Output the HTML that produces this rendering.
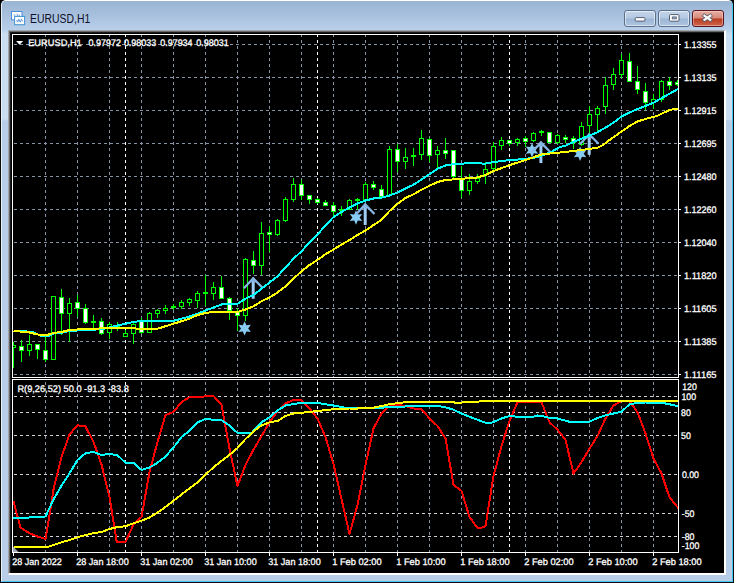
<!DOCTYPE html>
<html><head><meta charset="utf-8"><title>EURUSD,H1</title>
<style>
html,body{margin:0;padding:0;background:#fff;}
body{width:736px;height:583px;position:relative;overflow:hidden;font-family:"Liberation Sans",sans-serif;}
#win{position:absolute;left:0;top:0;width:734px;height:583px;background:#000;}
#frame{position:absolute;left:0;top:0;width:732px;height:582px;border:1px solid #0c0c0c;border-top-width:0;border-radius:5.5px 5.5px 0 0;
 background:linear-gradient(to bottom,#98b3d3 0px,#a7c0dd 15px,#b9d0ea 30px,#c9dcf0 34px,#cbdef1 119px,#b8cee8 121px,#b8cee8 100%);overflow:hidden;}
#frame:before{content:"";position:absolute;left:0;top:0;right:0;bottom:0;border:1px solid #43c6f2;border-top-color:#ffffff;border-left-color:#e8f1fa;border-radius:4.5px 4.5px 0 0;}
#client{position:absolute;left:8px;top:30px;width:715px;height:542px;background:#000;border-right:2px solid #fff;border-bottom:2px solid #fff;border-left:1px solid #a2a6ab;border-top:1px solid #a2a6ab;box-sizing:content-box;box-shadow:inset 1px 1px 0 #66686b, inset 2px 2px 0 #1a1a1b;}
#title{position:absolute;left:28.8px;top:11px;font-size:12px;line-height:16px;color:#10102a;white-space:nowrap;transform:scaleX(0.868);transform-origin:0 0;}
.btn{position:absolute;top:9.5px;width:30px;height:15px;border:1px solid #5a6f8c;border-radius:3px;
 background:linear-gradient(to bottom,#c4d5ea 0%,#b3c8e2 48%,#9db6d6 52%,#aec5e0 100%);box-shadow:inset 0 0 0 1px rgba(255,255,255,.55);}
#bclose{border-color:#5a1420;background:linear-gradient(to bottom,#e6b0a4 0%,#d88878 48%,#b93c20 52%,#cf644c 100%);box-shadow:inset 0 0 0 1px rgba(255,220,210,.45);}
.btn svg{position:absolute;left:0;top:0}
</style></head><body>
<div id="win"><div id="frame">
<svg style="position:absolute;left:10px;top:11px" width="16" height="16" viewBox="0 0 16 16"><rect x="0.5" y="0.5" width="10.5" height="8.3" fill="#fff" stroke="#4a8ee0"/><path d="M2.5 4 h2 m1 -1 l1.5 1.2 l-1.5 1.2 m2 -1.2 h1.5" fill="none" stroke="#4a8ee0" stroke-width="0.8"/><rect x="3.6" y="5.4" width="10" height="8.3" fill="#fff" stroke="#3f93d4"/><path d="M5.6 9 l1 2.2 l1.3 -3 l1.3 3 l1.3 -3 l1 2.2" fill="none" stroke="#3f86d8" stroke-width="0.85"/></svg>
<div id="title">EURUSD,H1</div>
<div class="btn" style="left:623px"><svg width="30" height="15"><rect x="10.2" y="6.6" width="9.8" height="3.5" rx="1" fill="#fff" stroke="#535e70"/></svg></div>
<div class="btn" style="left:657px"><svg width="30" height="15"><rect x="10.5" y="3.6" width="9.5" height="6.6" rx="1" fill="#fff" stroke="#535e70"/><rect x="13.2" y="5.9" width="4.2" height="2" fill="#8aa0c0" stroke="#535e70" stroke-width=".7"/></svg></div>
<div class="btn" id="bclose" style="left:691px"><svg width="30" height="15"><path d="M11.5 4.8 L17.3 8.8 M17.3 4.8 L11.5 8.8" stroke="#5b5f6e" stroke-width="3.8" stroke-linecap="square"/><path d="M11.5 4.8 L17.3 8.8 M17.3 4.8 L11.5 8.8" stroke="#fff" stroke-width="2.2" stroke-linecap="square"/></svg></div>
</div>
<div id="client"></div>
</div>
<svg width="736" height="583" viewBox="0 0 736 583" style="position:absolute;left:0;top:0">
<defs>
<clipPath id="cm"><rect x="13" y="35" width="665" height="342"/></clipPath>
<clipPath id="cs"><rect x="13" y="380" width="665" height="172"/></clipPath>
</defs>
<g stroke="#8595a6" stroke-width="1" stroke-dasharray="3 3" shape-rendering="crispEdges"><line x1="14" y1="44.5" x2="678" y2="44.5"/><line x1="14" y1="77.5" x2="678" y2="77.5"/><line x1="14" y1="110.5" x2="678" y2="110.5"/><line x1="14" y1="143.5" x2="678" y2="143.5"/><line x1="14" y1="176.5" x2="678" y2="176.5"/><line x1="14" y1="209.5" x2="678" y2="209.5"/><line x1="14" y1="242.5" x2="678" y2="242.5"/><line x1="14" y1="275.5" x2="678" y2="275.5"/><line x1="14" y1="308.5" x2="678" y2="308.5"/><line x1="14" y1="341.5" x2="678" y2="341.5"/><line x1="14" y1="374.5" x2="678" y2="374.5"/><line x1="45.5" y1="34" x2="45.5" y2="377"/><line x1="45.5" y1="382" x2="45.5" y2="552"/><line x1="77.5" y1="34" x2="77.5" y2="377"/><line x1="77.5" y1="382" x2="77.5" y2="552"/><line x1="109.5" y1="34" x2="109.5" y2="377"/><line x1="109.5" y1="382" x2="109.5" y2="552"/><line x1="141.5" y1="34" x2="141.5" y2="377"/><line x1="141.5" y1="382" x2="141.5" y2="552"/><line x1="173.5" y1="34" x2="173.5" y2="377"/><line x1="173.5" y1="382" x2="173.5" y2="552"/><line x1="205.5" y1="34" x2="205.5" y2="377"/><line x1="205.5" y1="382" x2="205.5" y2="552"/><line x1="237.5" y1="34" x2="237.5" y2="377"/><line x1="237.5" y1="382" x2="237.5" y2="552"/><line x1="269.5" y1="34" x2="269.5" y2="377"/><line x1="269.5" y1="382" x2="269.5" y2="552"/><line x1="301.5" y1="34" x2="301.5" y2="377"/><line x1="301.5" y1="382" x2="301.5" y2="552"/><line x1="333.5" y1="34" x2="333.5" y2="377"/><line x1="333.5" y1="382" x2="333.5" y2="552"/><line x1="365.5" y1="34" x2="365.5" y2="377"/><line x1="365.5" y1="382" x2="365.5" y2="552"/><line x1="397.5" y1="34" x2="397.5" y2="377"/><line x1="397.5" y1="382" x2="397.5" y2="552"/><line x1="429.5" y1="34" x2="429.5" y2="377"/><line x1="429.5" y1="382" x2="429.5" y2="552"/><line x1="461.5" y1="34" x2="461.5" y2="377"/><line x1="461.5" y1="382" x2="461.5" y2="552"/><line x1="493.5" y1="34" x2="493.5" y2="377"/><line x1="493.5" y1="382" x2="493.5" y2="552"/><line x1="525.5" y1="34" x2="525.5" y2="377"/><line x1="525.5" y1="382" x2="525.5" y2="552"/><line x1="557.5" y1="34" x2="557.5" y2="377"/><line x1="557.5" y1="382" x2="557.5" y2="552"/><line x1="589.5" y1="34" x2="589.5" y2="377"/><line x1="589.5" y1="382" x2="589.5" y2="552"/><line x1="621.5" y1="34" x2="621.5" y2="377"/><line x1="621.5" y1="382" x2="621.5" y2="552"/><line x1="653.5" y1="34" x2="653.5" y2="377"/><line x1="653.5" y1="382" x2="653.5" y2="552"/></g>
<g stroke="#d2d2d2" stroke-width="1" stroke-dasharray="3 3" shape-rendering="crispEdges"><line x1="14" y1="396.5" x2="678" y2="396.5"/><line x1="14" y1="412.5" x2="678" y2="412.5"/><line x1="14" y1="435.5" x2="678" y2="435.5"/><line x1="14" y1="474.5" x2="678" y2="474.5"/><line x1="14" y1="513.5" x2="678" y2="513.5"/><line x1="14" y1="536.5" x2="678" y2="536.5"/></g>
<g stroke="#ffffff" stroke-width="1" stroke-dasharray="3 3" shape-rendering="crispEdges"><line x1="125.5" y1="34" x2="125.5" y2="377"/><line x1="125.5" y1="382" x2="125.5" y2="552"/><line x1="317.5" y1="34" x2="317.5" y2="377"/><line x1="317.5" y1="382" x2="317.5" y2="552"/><line x1="509.5" y1="34" x2="509.5" y2="377"/><line x1="509.5" y1="382" x2="509.5" y2="552"/></g>
<g clip-path="url(#cm)" stroke="#00ff00" stroke-width="1" shape-rendering="crispEdges">
<line x1="13.5" y1="342" x2="13.5" y2="368"/>
<rect x="11.5" y="345.5" width="4" height="2.0" fill="#000"/>
<line x1="21.5" y1="340" x2="21.5" y2="362"/>
<rect x="19.5" y="346.5" width="4" height="4.0" fill="#fff"/>
<line x1="29.5" y1="335" x2="29.5" y2="356"/>
<rect x="27.5" y="344.5" width="4" height="6.0" fill="#000"/>
<line x1="37.5" y1="344" x2="37.5" y2="359"/>
<rect x="35.5" y="344.5" width="4" height="5.0" fill="#fff"/>
<line x1="45.5" y1="336" x2="45.5" y2="362"/>
<rect x="43.5" y="350.5" width="4" height="9.0" fill="#fff"/>
<line x1="53.5" y1="296" x2="53.5" y2="360"/>
<rect x="51.5" y="296.5" width="4" height="63.0" fill="#000"/>
<line x1="61.5" y1="289" x2="61.5" y2="335"/>
<rect x="59.5" y="297.5" width="4" height="16.0" fill="#fff"/>
<line x1="69.5" y1="298" x2="69.5" y2="342"/>
<rect x="67.5" y="303.5" width="4" height="10.0" fill="#000"/>
<line x1="77.5" y1="295" x2="77.5" y2="317"/>
<rect x="75.5" y="302.5" width="4" height="6.0" fill="#fff"/>
<line x1="85.5" y1="304" x2="85.5" y2="324"/>
<rect x="83.5" y="308.5" width="4" height="14.0" fill="#fff"/>
<line x1="93.5" y1="315" x2="93.5" y2="328"/>
<line x1="91.0" y1="322" x2="96.0" y2="322" stroke-width="2"/>
<line x1="101.5" y1="318" x2="101.5" y2="335"/>
<rect x="99.5" y="321.5" width="4" height="12.0" fill="#fff"/>
<line x1="109.5" y1="322" x2="109.5" y2="339"/>
<rect x="107.5" y="324.5" width="4" height="8.0" fill="#000"/>
<line x1="117.5" y1="322" x2="117.5" y2="331"/>
<rect x="115.5" y="326.5" width="4" height="2.0" fill="#fff"/>
<line x1="125.5" y1="330" x2="125.5" y2="336"/>
<rect x="123.5" y="333.5" width="4" height="3.0" fill="#000"/>
<line x1="133.5" y1="321" x2="133.5" y2="344"/>
<rect x="131.5" y="324.5" width="4" height="9.0" fill="#000"/>
<line x1="141.5" y1="318" x2="141.5" y2="334"/>
<rect x="139.5" y="321.5" width="4" height="11.0" fill="#fff"/>
<line x1="149.5" y1="312" x2="149.5" y2="332"/>
<rect x="147.5" y="313.5" width="4" height="19.0" fill="#000"/>
<line x1="157.5" y1="309" x2="157.5" y2="318"/>
<rect x="155.5" y="310.5" width="4" height="3.0" fill="#000"/>
<line x1="165.5" y1="305" x2="165.5" y2="314"/>
<rect x="163.5" y="308.5" width="4" height="2.0" fill="#000"/>
<line x1="173.5" y1="304" x2="173.5" y2="310"/>
<rect x="171.5" y="306.5" width="4" height="1.0" fill="#000"/>
<line x1="181.5" y1="300" x2="181.5" y2="309"/>
<rect x="179.5" y="302.5" width="4" height="4.0" fill="#000"/>
<line x1="189.5" y1="298" x2="189.5" y2="306"/>
<rect x="187.5" y="299.5" width="4" height="3.0" fill="#000"/>
<line x1="197.5" y1="291" x2="197.5" y2="308"/>
<rect x="195.5" y="293.5" width="4" height="7.0" fill="#000"/>
<line x1="205.5" y1="275" x2="205.5" y2="306"/>
<line x1="203.0" y1="293" x2="208.0" y2="293" stroke-width="2"/>
<line x1="213.5" y1="282" x2="213.5" y2="300"/>
<rect x="211.5" y="287.5" width="4" height="6.0" fill="#000"/>
<line x1="221.5" y1="276" x2="221.5" y2="299"/>
<rect x="219.5" y="287.5" width="4" height="11.0" fill="#fff"/>
<line x1="229.5" y1="297" x2="229.5" y2="320"/>
<rect x="227.5" y="298.5" width="4" height="12.0" fill="#fff"/>
<line x1="237.5" y1="308" x2="237.5" y2="331"/>
<rect x="235.5" y="311.5" width="4" height="4.0" fill="#fff"/>
<line x1="245.5" y1="258" x2="245.5" y2="321"/>
<rect x="243.5" y="259.5" width="4" height="56.0" fill="#000"/>
<line x1="253.5" y1="251" x2="253.5" y2="274"/>
<rect x="251.5" y="260.5" width="4" height="5.0" fill="#fff"/>
<line x1="261.5" y1="222" x2="261.5" y2="275"/>
<rect x="259.5" y="233.5" width="4" height="32.0" fill="#000"/>
<line x1="269.5" y1="226" x2="269.5" y2="252"/>
<rect x="267.5" y="232.5" width="4" height="2.0" fill="#fff"/>
<line x1="277.5" y1="219" x2="277.5" y2="236"/>
<rect x="275.5" y="220.5" width="4" height="14.0" fill="#000"/>
<line x1="285.5" y1="197" x2="285.5" y2="222"/>
<rect x="283.5" y="199.5" width="4" height="21.0" fill="#000"/>
<line x1="293.5" y1="178" x2="293.5" y2="202"/>
<rect x="291.5" y="184.5" width="4" height="15.0" fill="#000"/>
<line x1="301.5" y1="180" x2="301.5" y2="200"/>
<rect x="299.5" y="184.5" width="4" height="11.0" fill="#fff"/>
<line x1="309.5" y1="195" x2="309.5" y2="204"/>
<rect x="307.5" y="195.5" width="4" height="4.0" fill="#fff"/>
<line x1="317.5" y1="198" x2="317.5" y2="204"/>
<rect x="315.5" y="199.5" width="4" height="3.0" fill="#fff"/>
<line x1="325.5" y1="200" x2="325.5" y2="206"/>
<rect x="323.5" y="202.5" width="4" height="3.0" fill="#fff"/>
<line x1="333.5" y1="202" x2="333.5" y2="216"/>
<rect x="331.5" y="205.5" width="4" height="6.0" fill="#fff"/>
<line x1="341.5" y1="206" x2="341.5" y2="216"/>
<line x1="339.0" y1="210" x2="344.0" y2="210" stroke-width="2"/>
<line x1="349.5" y1="199" x2="349.5" y2="210"/>
<rect x="347.5" y="200.5" width="4" height="9.0" fill="#000"/>
<line x1="357.5" y1="198" x2="357.5" y2="210"/>
<line x1="355.0" y1="200" x2="360.0" y2="200" stroke-width="2"/>
<line x1="365.5" y1="182" x2="365.5" y2="200"/>
<rect x="363.5" y="184.5" width="4" height="15.0" fill="#000"/>
<line x1="373.5" y1="181" x2="373.5" y2="190"/>
<rect x="371.5" y="184.5" width="4" height="3.0" fill="#fff"/>
<line x1="381.5" y1="185" x2="381.5" y2="198"/>
<rect x="379.5" y="189.5" width="4" height="7.0" fill="#fff"/>
<line x1="389.5" y1="146" x2="389.5" y2="196"/>
<rect x="387.5" y="149.5" width="4" height="46.0" fill="#000"/>
<line x1="397.5" y1="144" x2="397.5" y2="172"/>
<rect x="395.5" y="149.5" width="4" height="12.0" fill="#fff"/>
<line x1="405.5" y1="148" x2="405.5" y2="169"/>
<rect x="403.5" y="157.5" width="4" height="4.0" fill="#000"/>
<line x1="413.5" y1="148" x2="413.5" y2="166"/>
<line x1="411.0" y1="156" x2="416.0" y2="156" stroke-width="2"/>
<line x1="421.5" y1="130" x2="421.5" y2="160"/>
<rect x="419.5" y="138.5" width="4" height="16.0" fill="#000"/>
<line x1="429.5" y1="138" x2="429.5" y2="162"/>
<rect x="427.5" y="139.5" width="4" height="16.0" fill="#fff"/>
<line x1="437.5" y1="146" x2="437.5" y2="169"/>
<rect x="435.5" y="150.5" width="4" height="4.0" fill="#000"/>
<line x1="445.5" y1="138" x2="445.5" y2="159"/>
<rect x="443.5" y="150.5" width="4" height="3.0" fill="#fff"/>
<line x1="453.5" y1="150" x2="453.5" y2="178"/>
<rect x="451.5" y="150.5" width="4" height="26.0" fill="#fff"/>
<line x1="461.5" y1="166" x2="461.5" y2="198"/>
<rect x="459.5" y="178.5" width="4" height="12.0" fill="#fff"/>
<line x1="469.5" y1="174" x2="469.5" y2="195"/>
<rect x="467.5" y="181.5" width="4" height="9.0" fill="#000"/>
<line x1="477.5" y1="174" x2="477.5" y2="184"/>
<rect x="475.5" y="178.5" width="4" height="3.0" fill="#000"/>
<line x1="485.5" y1="162" x2="485.5" y2="184"/>
<rect x="483.5" y="169.5" width="4" height="5.0" fill="#000"/>
<line x1="493.5" y1="142" x2="493.5" y2="170"/>
<rect x="491.5" y="146.5" width="4" height="22.0" fill="#000"/>
<line x1="501.5" y1="137" x2="501.5" y2="150"/>
<rect x="499.5" y="140.5" width="4" height="5.0" fill="#000"/>
<line x1="509.5" y1="140" x2="509.5" y2="146"/>
<rect x="507.5" y="140.5" width="4" height="3.0" fill="#fff"/>
<line x1="517.5" y1="138" x2="517.5" y2="146"/>
<rect x="515.5" y="139.5" width="4" height="3.0" fill="#000"/>
<line x1="525.5" y1="136" x2="525.5" y2="147"/>
<rect x="523.5" y="138.5" width="4" height="3.0" fill="#fff"/>
<line x1="533.5" y1="132" x2="533.5" y2="142"/>
<rect x="531.5" y="133.5" width="4" height="7.0" fill="#000"/>
<line x1="541.5" y1="130" x2="541.5" y2="136"/>
<line x1="539.0" y1="132" x2="544.0" y2="132" stroke-width="2"/>
<line x1="549.5" y1="132" x2="549.5" y2="143"/>
<rect x="547.5" y="132.5" width="4" height="10.0" fill="#fff"/>
<line x1="557.5" y1="134" x2="557.5" y2="144"/>
<rect x="555.5" y="135.5" width="4" height="7.0" fill="#000"/>
<line x1="565.5" y1="135" x2="565.5" y2="143"/>
<rect x="563.5" y="137.5" width="4" height="2.0" fill="#fff"/>
<line x1="573.5" y1="136" x2="573.5" y2="149"/>
<rect x="571.5" y="138.5" width="4" height="4.0" fill="#fff"/>
<line x1="581.5" y1="122" x2="581.5" y2="146"/>
<rect x="579.5" y="126.5" width="4" height="18.0" fill="#000"/>
<line x1="589.5" y1="106" x2="589.5" y2="133"/>
<rect x="587.5" y="114.5" width="4" height="11.0" fill="#000"/>
<line x1="597.5" y1="106" x2="597.5" y2="133"/>
<rect x="595.5" y="108.5" width="4" height="6.0" fill="#000"/>
<line x1="605.5" y1="77" x2="605.5" y2="114"/>
<rect x="603.5" y="85.5" width="4" height="21.0" fill="#000"/>
<line x1="613.5" y1="68" x2="613.5" y2="90"/>
<rect x="611.5" y="74.5" width="4" height="10.0" fill="#000"/>
<line x1="621.5" y1="54" x2="621.5" y2="78"/>
<rect x="619.5" y="60.5" width="4" height="14.0" fill="#000"/>
<line x1="629.5" y1="53" x2="629.5" y2="82"/>
<rect x="627.5" y="61.5" width="4" height="20.0" fill="#fff"/>
<line x1="637.5" y1="66" x2="637.5" y2="94"/>
<rect x="635.5" y="81.5" width="4" height="8.0" fill="#fff"/>
<line x1="645.5" y1="83" x2="645.5" y2="110"/>
<rect x="643.5" y="91.5" width="4" height="11.0" fill="#fff"/>
<line x1="653.5" y1="94" x2="653.5" y2="109"/>
<rect x="651.5" y="99.5" width="4" height="3.0" fill="#000"/>
<line x1="661.5" y1="80" x2="661.5" y2="102"/>
<rect x="659.5" y="81.5" width="4" height="18.0" fill="#000"/>
<line x1="669.5" y1="77" x2="669.5" y2="90"/>
<rect x="667.5" y="81.5" width="4" height="4.0" fill="#fff"/>
<line x1="677.5" y1="80" x2="677.5" y2="86"/>
<rect x="675.5" y="82.5" width="4" height="2.0" fill="#fff"/>
</g>
<g clip-path="url(#cm)">
<polygon fill="#87caf2" points="244.60,321.20 246.40,325.28 250.84,324.80 248.20,328.40 250.84,332.00 246.40,331.52 244.60,335.60 242.80,331.52 238.36,332.00 241.00,328.40 238.36,324.80 242.80,325.28"/>
<g fill="none" stroke="#88b6e4" stroke-width="2.3"><line stroke-width="3.0" x1="253.2" y1="279.8" x2="253.2" y2="298.8" stroke="#9fcdf5"/><polyline points="243.9,288.3 253.2,278.3 262.5,287.8"/><polygon stroke="none" fill="#88b6e4" points="253.2,276.5 249.4,282.3 257.0,282.3"/></g>
<polygon fill="#87caf2" points="356.00,210.30 357.80,214.38 362.24,213.90 359.60,217.50 362.24,221.10 357.80,220.62 356.00,224.70 354.20,220.62 349.76,221.10 352.40,217.50 349.76,213.90 354.20,214.38"/>
<g fill="none" stroke="#88b6e4" stroke-width="2.3"><line stroke-width="3.0" x1="365.2" y1="206.0" x2="365.2" y2="225.0" stroke="#9fcdf5"/><polyline points="355.9,214.5 365.2,204.5 374.5,214.0"/><polygon stroke="none" fill="#88b6e4" points="365.2,202.7 361.4,208.5 369.0,208.5"/></g>
<polygon fill="#87caf2" points="532.00,143.00 533.80,147.08 538.24,146.60 535.60,150.20 538.24,153.80 533.80,153.32 532.00,157.40 530.20,153.32 525.76,153.80 528.40,150.20 525.76,146.60 530.20,147.08"/>
<g fill="none" stroke="#88b6e4" stroke-width="2.3"><line stroke-width="3.0" x1="540.9" y1="144.0" x2="540.9" y2="163.0" stroke="#9fcdf5"/><polyline points="531.6,152.5 540.9,142.5 550.2,152.0"/><polygon stroke="none" fill="#88b6e4" points="540.9,140.7 537.1,146.5 544.7,146.5"/></g>
<polygon fill="#87caf2" points="580.10,146.50 581.90,150.58 586.34,150.10 583.70,153.70 586.34,157.30 581.90,156.82 580.10,160.90 578.30,156.82 573.86,157.30 576.50,153.70 573.86,150.10 578.30,150.58"/>
<g fill="none" stroke="#88b6e4" stroke-width="2.3"><line stroke-width="3.0" x1="589.2" y1="135.8" x2="589.2" y2="154.8" stroke="#9fcdf5"/><polyline points="579.9,144.3 589.2,134.3 598.5,143.8"/><polygon stroke="none" fill="#88b6e4" points="589.2,132.5 585.4,138.3 593.0,138.3"/></g>
<polyline fill="none" stroke="#00ffff" stroke-width="2" stroke-linejoin="round" shape-rendering="crispEdges" points="13.50,331.00 26.00,331.30 33.60,332.50 41.00,336.00 48.60,336.40 53.50,333.50 61.50,332.80 69.50,331.00 77.50,330.50 93.50,329.75 105.00,328.60 109.50,327.50 117.50,325.50 125.50,323.75 133.50,322.00 141.50,320.75 157.50,320.75 173.50,320.75 181.50,318.75 189.50,316.50 197.50,313.75 205.50,310.50 213.50,307.50 221.50,304.50 229.50,303.75 237.50,303.75 245.50,298.75 253.50,295.00 261.50,288.75 269.50,282.50 277.50,276.25 285.50,267.50 293.50,258.75 301.50,251.25 309.50,242.50 317.50,234.50 325.50,225.50 333.50,217.00 341.50,212.00 349.50,207.50 357.50,203.50 365.50,200.50 373.50,198.50 382.50,197.50 389.50,195.50 397.50,192.50 405.50,188.50 413.50,184.70 421.50,179.50 429.50,174.30 437.50,168.75 445.50,165.50 453.50,164.00 475.00,163.00 485.00,163.75 493.50,162.00 510.00,160.00 525.50,159.00 537.50,157.00 550.00,152.50 560.00,147.00 565.50,145.70 573.50,142.00 581.50,138.70 589.50,135.50 597.50,132.20 605.50,127.60 613.50,122.60 621.50,116.50 629.50,112.50 637.50,109.00 645.50,106.00 653.50,102.75 664.50,96.50 679.00,88.50"/>
<polyline fill="none" stroke="#ffff00" stroke-width="2" stroke-linejoin="round" shape-rendering="crispEdges" points="13.50,330.75 29.50,332.50 37.50,334.50 45.50,335.50 53.50,333.00 61.50,332.00 69.50,330.00 77.50,329.50 93.50,328.75 109.50,328.00 125.50,328.00 141.50,328.75 157.50,328.75 165.50,326.25 173.50,323.75 181.50,321.25 189.50,318.75 197.50,315.00 205.50,313.00 213.50,312.00 229.50,312.00 237.50,312.00 245.50,309.50 253.50,306.25 261.50,301.25 269.50,297.50 277.50,292.50 285.50,286.25 293.50,278.75 301.50,271.25 309.50,265.00 317.50,260.00 325.50,254.25 333.50,249.50 341.50,244.50 349.50,240.00 357.50,235.00 365.50,230.50 373.50,225.00 381.50,220.00 389.50,211.00 397.50,203.75 405.50,198.00 413.50,194.30 421.50,189.80 429.50,185.80 437.50,182.00 445.50,180.00 461.50,178.75 477.50,177.50 485.50,175.00 493.50,171.00 510.00,165.00 525.50,160.00 541.50,154.50 555.00,153.00 565.50,152.00 581.50,150.00 597.50,147.75 603.00,145.00 609.50,140.00 621.50,131.50 629.50,126.00 637.50,121.50 647.00,118.50 657.00,116.00 669.50,110.00 679.00,108.30"/>
</g>
<g clip-path="url(#cs)">
<polyline fill="none" stroke="#ff0000" stroke-width="2" stroke-linejoin="round" shape-rendering="crispEdges" points="13.50,501.50 20.50,527.50 29.50,533.25 37.50,536.50 45.50,539.00 49.25,517.00 53.50,489.50 61.50,457.00 69.50,434.50 77.50,425.25 85.50,426.50 93.50,442.00 101.50,464.50 109.50,497.00 116.75,542.00 125.50,542.00 133.50,524.50 141.50,517.00 149.50,472.00 157.50,442.00 165.50,415.00 173.50,412.00 181.50,402.00 189.50,397.25 201.50,397.25 205.50,396.00 213.50,396.00 221.50,404.75 229.50,448.50 237.50,486.00 245.50,464.75 253.50,449.75 261.50,436.00 269.50,422.25 277.50,411.00 285.50,403.50 293.50,399.75 301.50,400.25 309.50,408.50 317.50,418.50 325.50,437.25 333.50,464.00 341.50,499.00 349.50,534.00 357.50,505.00 365.50,465.00 373.50,428.50 381.50,413.50 389.50,406.00 397.50,404.75 405.50,406.00 413.50,408.50 421.50,409.00 429.50,418.50 437.50,426.00 445.50,438.50 453.50,484.75 461.50,491.00 469.50,517.00 477.50,528.00 481.50,527.80 485.50,526.00 493.50,476.00 501.50,446.00 509.50,421.00 517.50,402.25 541.50,402.25 549.50,422.25 557.50,429.75 565.50,439.75 573.50,473.50 581.50,462.25 589.50,448.50 597.50,436.00 605.50,418.50 613.50,405.50 621.50,401.00 629.50,401.00 637.50,412.25 645.50,433.50 653.50,458.50 661.50,473.50 669.50,497.25 679.00,509.00"/>
<polyline fill="none" stroke="#00ffff" stroke-width="2" stroke-linejoin="round" shape-rendering="crispEdges" points="13.50,517.75 29.50,517.50 45.50,516.50 53.50,499.50 61.50,485.75 69.50,473.25 77.50,460.00 85.50,453.25 93.50,452.00 101.50,455.00 109.50,454.00 117.50,455.25 125.50,462.75 133.50,462.75 141.50,470.00 149.50,467.50 157.50,462.75 165.50,456.50 173.50,447.50 181.50,437.00 189.50,431.00 197.50,422.25 205.50,419.00 213.50,419.75 221.50,420.25 229.50,425.50 237.50,433.00 251.50,433.00 261.50,422.25 269.50,417.25 277.50,410.50 285.50,405.50 293.50,404.00 301.50,403.00 317.50,403.00 333.50,405.50 346.50,408.00 357.50,408.50 373.50,408.00 389.50,407.25 405.50,406.50 421.50,406.00 437.50,406.00 445.50,407.25 453.50,409.75 461.50,413.50 469.50,416.75 477.50,419.75 485.50,422.75 491.50,422.75 501.50,418.50 509.50,416.00 517.50,416.75 533.50,416.75 537.50,415.50 541.50,416.00 549.50,417.75 557.50,418.50 569.50,421.75 589.50,421.75 597.50,418.00 605.50,415.25 613.50,413.50 621.50,411.75 629.50,404.25 637.50,403.00 645.50,402.50 661.50,402.75 669.50,404.25 679.00,406.50"/>
<polyline fill="none" stroke="#ffff00" stroke-width="2" stroke-linejoin="round" shape-rendering="crispEdges" points="13.50,546.80 48.00,546.80 53.50,545.00 61.50,542.30 69.50,540.00 77.50,537.30 85.50,535.00 93.50,533.25 101.50,532.00 109.50,529.00 117.50,527.00 125.50,526.25 133.50,523.25 141.50,520.75 149.50,517.50 157.50,512.50 165.50,507.00 173.50,500.75 181.50,494.50 189.50,488.50 197.50,482.25 213.50,467.25 229.50,454.75 237.50,448.00 245.50,439.00 253.50,431.50 261.50,425.50 269.50,422.25 277.50,421.00 285.50,416.00 293.50,413.50 301.50,412.75 317.50,411.00 333.50,409.25 349.50,408.50 357.50,408.50 373.50,407.75 389.50,404.25 405.50,402.25 421.50,401.75 452.50,401.75 455.00,402.75 469.50,402.25 485.50,401.00 679.00,401.00"/>
<polygon points="13,546.5 18.5,552 13,552" fill="#a0a8b4"/>
</g>
<g fill="none" stroke="#ffffff" stroke-width="1" shape-rendering="crispEdges">
<rect x="12.5" y="34.5" width="666" height="343"/>
<path d="M12.5 552.5 V379.5 H678.5 V552.5 H12.5"/>
<line x1="679" y1="44.5" x2="681" y2="44.5"/>
<line x1="679" y1="77.5" x2="681" y2="77.5"/>
<line x1="679" y1="110.5" x2="681" y2="110.5"/>
<line x1="679" y1="143.5" x2="681" y2="143.5"/>
<line x1="679" y1="176.5" x2="681" y2="176.5"/>
<line x1="679" y1="209.5" x2="681" y2="209.5"/>
<line x1="679" y1="242.5" x2="681" y2="242.5"/>
<line x1="679" y1="275.5" x2="681" y2="275.5"/>
<line x1="679" y1="308.5" x2="681" y2="308.5"/>
<line x1="679" y1="341.5" x2="681" y2="341.5"/>
<line x1="679" y1="374.5" x2="681" y2="374.5"/>
<line x1="13.5" y1="552" x2="13.5" y2="556"/>
<line x1="77.5" y1="552" x2="77.5" y2="556"/>
<line x1="141.5" y1="552" x2="141.5" y2="556"/>
<line x1="205.5" y1="552" x2="205.5" y2="556"/>
<line x1="269.5" y1="552" x2="269.5" y2="556"/>
<line x1="333.5" y1="552" x2="333.5" y2="556"/>
<line x1="397.5" y1="552" x2="397.5" y2="556"/>
<line x1="461.5" y1="552" x2="461.5" y2="556"/>
<line x1="525.5" y1="552" x2="525.5" y2="556"/>
<line x1="589.5" y1="552" x2="589.5" y2="556"/>
<line x1="653.5" y1="552" x2="653.5" y2="556"/>
</g>
<g font-family="Liberation Sans, sans-serif" font-size="9.6px" text-rendering="geometricPrecision" fill="#ffffff" stroke="#ffffff" stroke-width="0.3">
<text x="684.00" y="47.90" textLength="32.60" lengthAdjust="spacingAndGlyphs">1.13355</text>
<text x="684.00" y="80.90" textLength="32.60" lengthAdjust="spacingAndGlyphs">1.13135</text>
<text x="684.00" y="113.90" textLength="32.60" lengthAdjust="spacingAndGlyphs">1.12915</text>
<text x="684.00" y="146.90" textLength="32.60" lengthAdjust="spacingAndGlyphs">1.12695</text>
<text x="684.00" y="179.90" textLength="32.60" lengthAdjust="spacingAndGlyphs">1.12480</text>
<text x="684.00" y="212.90" textLength="32.60" lengthAdjust="spacingAndGlyphs">1.12260</text>
<text x="684.00" y="245.90" textLength="32.60" lengthAdjust="spacingAndGlyphs">1.12040</text>
<text x="684.00" y="278.90" textLength="32.60" lengthAdjust="spacingAndGlyphs">1.11820</text>
<text x="684.00" y="311.90" textLength="32.60" lengthAdjust="spacingAndGlyphs">1.11605</text>
<text x="684.00" y="344.90" textLength="32.60" lengthAdjust="spacingAndGlyphs">1.11385</text>
<text x="684.00" y="377.90" textLength="32.60" lengthAdjust="spacingAndGlyphs">1.11165</text>
<text x="682.20" y="389.80" textLength="14.64" lengthAdjust="spacingAndGlyphs">120</text>
<text x="681.40" y="399.90" textLength="14.64" lengthAdjust="spacingAndGlyphs">100</text>
<text x="681.10" y="415.90" textLength="9.76" lengthAdjust="spacingAndGlyphs">80</text>
<text x="681.00" y="439.00" textLength="9.76" lengthAdjust="spacingAndGlyphs">50</text>
<text x="681.90" y="477.90" textLength="17.08" lengthAdjust="spacingAndGlyphs">0.00</text>
<text x="681.80" y="516.90" textLength="12.68" lengthAdjust="spacingAndGlyphs">-50</text>
<text x="681.80" y="539.60" textLength="12.68" lengthAdjust="spacingAndGlyphs">-80</text>
<text x="681.80" y="549.00" textLength="17.56" lengthAdjust="spacingAndGlyphs">-100</text>
<text x="12.20" y="564.60" textLength="49.60" lengthAdjust="spacingAndGlyphs">28 Jan 2022</text>
<text x="76.20" y="564.60" textLength="52.50" lengthAdjust="spacingAndGlyphs">28 Jan 18:00</text>
<text x="140.20" y="564.60" textLength="52.50" lengthAdjust="spacingAndGlyphs">31 Jan 02:00</text>
<text x="204.20" y="564.60" textLength="52.50" lengthAdjust="spacingAndGlyphs">31 Jan 10:00</text>
<text x="268.20" y="564.60" textLength="52.50" lengthAdjust="spacingAndGlyphs">31 Jan 18:00</text>
<text x="332.20" y="564.60" textLength="49.40" lengthAdjust="spacingAndGlyphs">1 Feb 02:00</text>
<text x="396.20" y="564.60" textLength="49.40" lengthAdjust="spacingAndGlyphs">1 Feb 10:00</text>
<text x="460.20" y="564.60" textLength="49.40" lengthAdjust="spacingAndGlyphs">1 Feb 18:00</text>
<text x="524.20" y="564.60" textLength="49.40" lengthAdjust="spacingAndGlyphs">2 Feb 02:00</text>
<text x="588.20" y="564.60" textLength="49.40" lengthAdjust="spacingAndGlyphs">2 Feb 10:00</text>
<text x="652.20" y="564.60" textLength="49.40" lengthAdjust="spacingAndGlyphs">2 Feb 18:00</text>
<text x="28.20" y="45.90" textLength="53.60" lengthAdjust="spacingAndGlyphs">EURUSD,H1</text>
<text x="88.50" y="45.90" textLength="32.40" lengthAdjust="spacingAndGlyphs">0.97972</text>
<text x="123.90" y="45.90" textLength="32.40" lengthAdjust="spacingAndGlyphs">0.98033</text>
<text x="160.20" y="45.90" textLength="32.40" lengthAdjust="spacingAndGlyphs">0.97934</text>
<text x="196.30" y="45.90" textLength="32.40" lengthAdjust="spacingAndGlyphs">0.98031</text>
<text x="17.40" y="391.90" textLength="111.40" lengthAdjust="spacingAndGlyphs">R(9,26,52) 50.0 -91.3 -83.8</text>
</g>
<polygon points="16.1,41 23.1,41 19.6,44.8" fill="#fff"/>
</svg>
</body></html>
